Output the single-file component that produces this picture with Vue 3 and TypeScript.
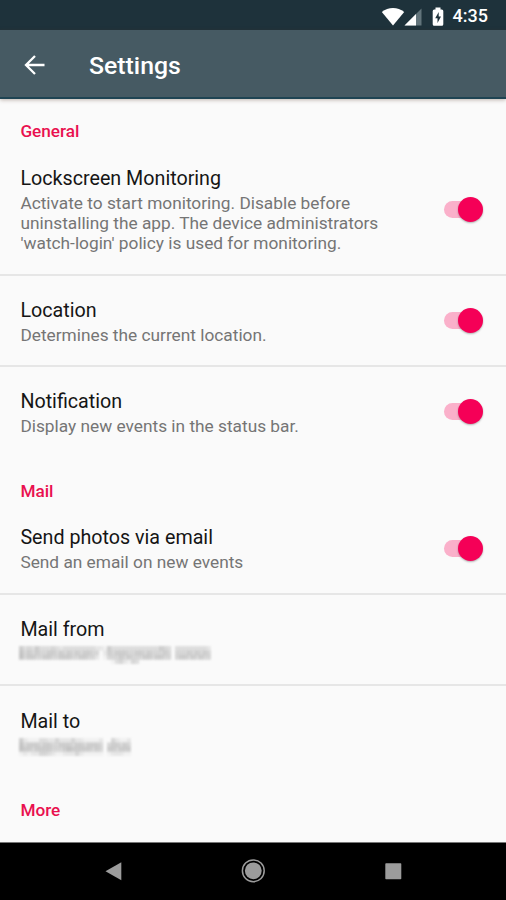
<script setup lang="ts">
interface Row {
  title: string
  summary?: string[]
  toggle?: boolean
  mosaic?: number[][]
}
interface Section {
  name: string
  rows: Row[]
}

// Darkness levels (0-9) of each hidden address, one digit per 4px cell.
const cells = (lines: string[]): number[][] => lines.map((l) => l.split('').map(Number))

const hiddenFrom = cells([
  '534353334323333333322153333333333335430333333332',
  '645454455454545455440254555445545444540444545454',
  '645544554455544554420144454544455455440455454544',
  '000000000000000000000001342143000000000000000000',
])
const hiddenTo = cells([
  '5211133224222422111120042112',
  '6455545544555455455540455454',
  '6554555544456555554540554555',
  '1212244321122242111110122211',
])

const sections: Section[] = [
  {
    name: 'General',
    rows: [
      {
        title: 'Lockscreen Monitoring',
        summary: [
          'Activate to start monitoring. Disable before',
          'uninstalling the app. The device administrators',
          "'watch-login' policy is used for monitoring.",
        ],
        toggle: true,
      },
      { title: 'Location', summary: ['Determines the current location.'], toggle: true },
      { title: 'Notification', summary: ['Display new events in the status bar.'], toggle: true },
    ],
  },
  {
    name: 'Mail',
    rows: [
      { title: 'Send photos via email', summary: ['Send an email on new events'], toggle: true },
      { title: 'Mail from', mosaic: hiddenFrom },
      { title: 'Mail to', mosaic: hiddenTo },
    ],
  },
  { name: 'More', rows: [] },
]
</script>

<template>
  <div class="screen">
    <div class="status">
      <svg class="status-icons" width="64" height="22" viewBox="0 0 64 22">
        <path d="M0.800 6C7.200 0.600 16.800 0.600 23.200 6L12 19.500Z" fill="#fff" />
        <path d="M40.500 2.500V19.500H23.500Z" fill="#62747b" />
        <path d="M35 8V19.500H23.500Z" fill="#fff" />
        <path d="M54.500 1.500h5v2h1.300q1.500 0 1.500 1.500v13.200q0 1.500-1.500 1.500h-7.600q-1.500 0-1.500-1.500V5q0-1.500 1.500-1.500h1.300z" fill="#fff" />
        <path d="M57.700 6L54.200 12.300h2.300v4.700l3.500-6.500h-2.300z" fill="#1e323b" />
      </svg>
      <span class="clock">4:35</span>
    </div>
    <header class="appbar">
      <svg class="back" width="22" height="22" viewBox="0 0 22 22">
        <path d="M20.500 11H2.500M11 2L2 11L11 20" fill="none" stroke="#fff" stroke-width="2.300" />
      </svg>
      <h1>Settings</h1>
    </header>
    <main>
      <section v-for="s in sections" :key="s.name">
        <h2>{{ s.name }}</h2>
        <div v-for="r in s.rows" :key="r.title" class="row">
          <div class="copy">
            <div class="title">{{ r.title }}</div>
            <div v-for="line in r.summary" :key="line" class="summary">{{ line }}</div>
            <svg v-if="r.mosaic" class="mosaic" :width="r.mosaic[0].length * 4" height="20">
              <template v-for="(line, y) in r.mosaic" :key="y">
                <rect
                  v-for="(v, x) in line"
                  :key="x"
                  :x="x * 4"
                  :y="y * 4.5 + 2"
                  width="4.200"
                  height="4.700"
                  fill="#555"
                  :fill-opacity="v * 0.052"
                />
              </template>
            </svg>
          </div>
          <div v-if="r.toggle" class="switch"><span class="thumb"></span></div>
        </div>
      </section>
    </main>
    <nav>
      <svg width="506" height="58" viewBox="0 0 506 58">
        <g fill="#9c9c9c">
          <path d="M105.500 28.200L121.300 19.200V37.200Z" />
          <circle cx="253.300" cy="27.800" r="8.400" />
          <circle cx="253.300" cy="27.800" r="10.900" fill="none" stroke="#9c9c9c" stroke-width="1.500" />
          <rect x="385.300" y="20.200" width="16" height="16" rx=".7" />
        </g>
      </svg>
    </nav>
  </div>
</template>

<style>
body {
  margin: 0;
}
</style>

<style scoped>
.screen {
  width: 506px;
  height: 900px;
  display: flex;
  flex-direction: column;
  overflow: hidden;
  background: #fafafa;
  font-family: Roboto, "Liberation Sans", sans-serif;
}
.status {
  height: 30px;
  flex: none;
  box-sizing: border-box;
  padding: 1px 18px 0 0;
  display: flex;
  align-items: center;
  justify-content: flex-end;
  gap: 8px;
  background: #1e323b;
}
.status-icons {
  margin-top: 3px;
}
.clock {
  color: #fff;
  font-size: 18px;
  font-weight: 500;
  line-height: 30px;
}
.appbar {
  height: 69px;
  flex: none;
  box-sizing: border-box;
  padding: 1px 24px 0 24px;
  display: flex;
  align-items: center;
  gap: 43px;
  background: #465a63;
  border-bottom: 2px solid #1f4453;
  box-shadow: 0 1px 4px rgba(80, 50, 30, 0.35);
}
.back {
  margin-top: 1px;
}
h1 {
  margin: 3px 0 0;
  color: #fff;
  font-size: 24.800px;
  font-weight: 500;
  line-height: 32px;
}
main {
  flex: 1;
  min-height: 0;
  overflow: hidden;
}
.appbar,
nav {
  position: relative;
}
h2 {
  margin: 0;
  height: 45px;
  box-sizing: border-box;
  padding: 24.400px 20.400px 0;
  color: #e9104f;
  font-size: 17.200px;
  font-weight: 500;
  line-height: 20px;
}
section:first-child h2 {
  padding-top: 22px;
}
.row {
  box-sizing: border-box;
  min-height: 91.400px;
  padding: 23px 23px 19px 20.400px;
  display: flex;
  align-items: center;
  justify-content: space-between;
}
.row + .row {
  border-top: 2px solid #e6e6e6;
  padding-top: 21px;
}
section:first-child h2 + .row {
  padding: 22px 23px 20px 20.400px;
}
.title {
  margin-bottom: 2px;
  color: #151515;
  font-size: 19.700px;
  line-height: 25px;
}
.summary {
  color: #757575;
  font-size: 17.300px;
  line-height: 20.200px;
  white-space: nowrap;
}
.mosaic {
  display: block;
  margin: 1px 0 -1px -1px;
  filter: blur(0.900px);
}
.switch {
  width: 39px;
  height: 17px;
  margin-bottom: 2px;
  border-radius: 9px;
  background: linear-gradient(90deg, #fab0ca 28px, transparent 28px);
  display: flex;
  align-items: center;
  justify-content: flex-end;
}
section:first-child h2 + .row .switch {
  margin-bottom: 0;
}
.thumb {
  width: 25px;
  height: 25px;
  flex: none;
  border-radius: 50%;
  background: #f50057;
  box-shadow: 0 1px 2px rgba(0, 0, 0, 0.3);
}
nav {
  height: 58px;
  flex: none;
  background: #000;
  border-top: 1px solid #777;
  box-sizing: border-box;
}
nav svg {
  display: block;
}
</style>
